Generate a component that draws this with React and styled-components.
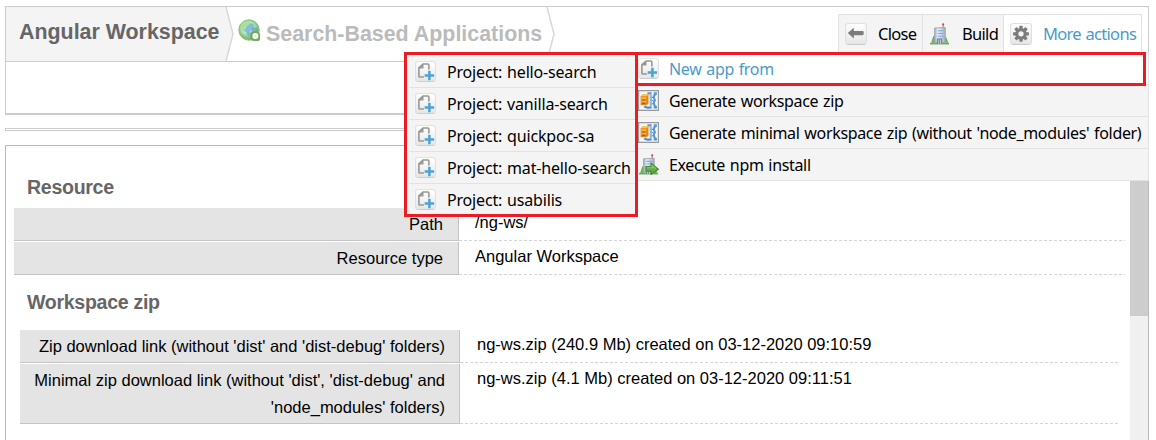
import React from "react";
import styled, { createGlobalStyle } from "styled-components";

const GlobalStyle = createGlobalStyle`
  * { box-sizing: border-box; }
  body { margin: 0; background: #fff; overflow: hidden; }
`;

const Page = styled.main`
  position: relative;
  width: 1156px;
  height: 440px;
  padding: 6px 7px 0 5px;
  overflow: hidden;
  color: #000;
  font: 16.5px/27px "Liberation Sans", Arial, sans-serif;
  white-space: nowrap;
`;

const Header = styled.header`
  height: 109px;
  border: 1px solid #ccc;
  border-bottom-width: 2px;
`;

const TopBar = styled.div`
  display: flex;
  height: 55px;
  border-bottom: 1px solid #ccc;
`;

const Crumb = styled.div`
  display: flex;
  flex: none;
  align-items: flex-start;
  width: ${(p) => p.$width}px;
  padding: ${(p) => (p.$current ? "10px 0 0 13px" : "12px 0 0 4px")};
  background: ${(p) => (p.$current ? "#f4f4f4" : "#fff")};
  color: ${(p) => (p.$current ? "#666" : "#bbb")};
  font-size: 21.4px;
  line-height: 30px;
  font-weight: bold;
  svg { flex: none; }
`;

const GlobeSlot = styled.span`
  flex: none;
  width: 28px;
  height: 24px;
  line-height: 0;
`;

const Toolbar = styled.nav`
  display: flex;
  width: 304px;
  height: 39px;
  margin: 7px 6px 0 auto;
  border: 1px solid #e2e2e2;
  border-bottom: 0;
`;

const Tool = styled.div`
  display: flex;
  flex: none;
  align-items: center;
  width: ${(p) => p.$width}px;
  padding-left: 6px;
  gap: ${(p) => p.$gap}px;
  background: ${(p) => (p.$active ? "#fff" : "#f4f4f4")};
  color: ${(p) => (p.$active ? "#4a9bc9" : "#000")};
  border-left: ${(p) => (p.$first ? 0 : "1px solid #e2e2e2")};
  font-size: 16.5px;
  svg { flex: none; }
`;

const Label = styled.span`
  font-family: "Noto Sans", sans-serif;
  letter-spacing: ${(p) => p.$spacing || 0}px;
  word-spacing: 1px;
`;

const ToolLabel = styled(Label)`
  letter-spacing: -0.7px;
  padding-bottom: 1px;
`;

const MenuLabel = styled(Label)`
  padding-top: 2px;
`;

const Splitter = styled.div`
  height: 3px;
  margin-top: 13px;
  border: 1px solid #ccc;
`;

const Panel = styled.section`
  display: flex;
  justify-content: space-between;
  height: 295px;
  margin-top: 14px;
  border: 1px solid #bbb;
  border-bottom: 0;
`;

const Content = styled.div`
  width: 1120px;
  padding-left: 8px;
`;

const Heading = styled.h2`
  height: ${(p) => p.$height}px;
  margin: 0;
  padding: ${(p) => p.$top}px 0 0 13px;
  color: #666;
  font-size: 19.6px;
  letter-spacing: -0.32px;
  line-height: 22px;
`;

const Properties = styled.div`
  width: ${(p) => (p.$inset ? 1099 : 1111)}px;
  margin-left: ${(p) => (p.$inset ? 6 : 0)}px;
  display: flex;
  flex-direction: column;
  gap: 1px;
`;

const Property = styled.div`
  display: flex;
  height: ${(p) => (p.$tall ? 60 : 33)}px;
`;

const PropertyName = styled.div`
  width: ${(p) => (p.$inset ? 440 : 445)}px;
  padding: 3px ${(p) => (p.$inset ? 14 : 15)}px 0 0;
  background: #e4e4e4;
  border: solid #c4c4c4;
  border-width: 0 1px 1px 0;
  text-align: right;
`;

const PropertyValue = styled.div`
  flex: 1;
  padding: 1px 0 0 ${(p) => (p.$inset ? 17 : 16)}px;
  background: repeating-linear-gradient(90deg, #d4d4d4 0 3px, transparent 3px 5px) 0 100% / 100% 1px no-repeat;
`;

const ScrollTrack = styled.div`
  width: 18px;
  background: #f0f0f0;
`;

const ScrollThumb = styled.div`
  height: 170px;
  background: #cdcdcd;
`;

const Menu = styled.div`
  position: absolute;
  top: 52px;
  left: 636px;
  width: 513px;
  border-top: 1px solid #e2e2e2;
  border-right: 1px solid #e2e2e2;
`;

const MenuItem = styled.div`
  display: flex;
  align-items: center;
  gap: ${(p) => p.$gap || 10}px;
  height: 32px;
  padding-left: ${(p) => p.$pad || 2}px;
  background: ${(p) => (p.$active ? "#fff" : "#f4f4f4")};
  color: ${(p) => (p.$active ? "#4a9bc9" : "#000")};
  border-bottom: 1px solid #e2e2e2;
  font-size: 16px;
  svg { flex: none; }
`;

const Submenu = styled.div`
  position: absolute;
  top: 52px;
  left: 404px;
  width: 234px;
  height: 165px;
  padding: 1px 0 0 2px;
  border: 3px solid #ed1c24;
  background: #f4f4f4;
  overflow: hidden;
`;

const Highlight = styled.div`
  position: absolute;
  top: 52px;
  left: 635px;
  width: 511px;
  height: 34px;
  border: 3px solid #ed1c24;
`;

const Tile = () => (
  <>
    <rect x=".5" y=".5" width="19" height="19" rx="2.5" fill="url(#tile)" stroke="#e0e0e0" />
    <path d="M2 19.5h16" stroke="#ccc" />
  </>
);

const Definitions = styled.svg`
  position: absolute;
`;

const Gradients = () => (
  <Definitions width="0" height="0">
    <defs>
      <linearGradient id="tile" x2="0" y2="1"><stop stopColor="#fff" /><stop offset="1" stopColor="#e6e6e6" /></linearGradient>
      <radialGradient id="globe" cx=".45" cy=".4"><stop stopColor="#d6f1f5" /><stop offset=".6" stopColor="#b9e5b8" /><stop offset="1" stopColor="#79bf6c" /></radialGradient>
      <linearGradient id="tower"><stop stopColor="#9eaab5" /><stop offset=".3" stopColor="#e4f0ff" /><stop offset="1" stopColor="#9faec0" /></linearGradient>
    </defs>
  </Definitions>
);

const Globe = () => (
  <svg width="22" height="22" viewBox="0 0 22 22">
    <circle cx="11" cy="11" r="10.2" fill="url(#globe)" stroke="#84c27a" strokeWidth="1" />
    <path d="M3.5 7 7 3l4-1 1 2-2 3-3 1-1 4-2-1z" fill="#a4dc8e" opacity=".8" />
    <path d="m8 8 5-4 3 2-1 4-3 2 1 3-3 3-2-5-2-1z" fill="#69add9" opacity=".75" />
    <path d="m15 8 4 1 1 4-4 1-3-2z" fill="#5e9fbd" opacity=".65" />
    <path d="M12 17q0-5 5-5 5 0 5 4v4q0 2-2 2h-4q-4 0-4-5z" fill="#76a85e" />
    <circle cx="17.4" cy="17" r="3" fill="#fff" />
    <path d="M17.4 16v2M16.4 17h2" stroke="#d5e6cd" />
  </svg>
);

const BackIcon = () => (
  <svg width="22" height="22" viewBox="0 0 20 20"><Tile /><path d="M2.5 9.2 8 4.4v2.9h8q1 0 1 1v1.8q0 1-1 1H8V14z" fill="#7c7c7c" /></svg>
);

const Tower = () => (
  <>
    <path d="M2.5 18 4.5 12l2 6M14 18l2-5 2 5" fill="#65ba53" stroke="#5ba44e" strokeWidth=".7" />
    <path d="M1 18h18v1.5H1z" fill="#65ae52" />
    <path d="m5.3 4.6 10.2-.6v14H5.3z" fill="url(#tower)" stroke="#9aa3ab" strokeWidth=".8" />
    <path d="M8 7h6M8 9.5h6M8 12h6" stroke="#86afd6" />
    <path d="M7.5 14h5v5h-5z" fill="#7c858e" />
    <path d="M9.2 15v4M11 15v4" stroke="#d8e0e5" strokeWidth=".7" />
    <path d="M13.5 4V1" stroke="#9b898d" /><circle cx="13.5" cy="1.3" r="1" fill="#dc3e35" />
  </>
);

const BuildIcon = () => (
  <svg width="21" height="22" viewBox="0 0 20 20" preserveAspectRatio="none"><Tower /></svg>
);

const GearIcon = () => (
  <svg width="22" height="22" viewBox="0 0 20 20">
    <Tile />
    <g fill="#7c7c7c">
      {[0, 45, 90, 135].map((a) => (
        <rect key={a} x="8.5" y="2.6" width="3" height="14.4" rx=".4" transform={`rotate(${a} 10 9.8)`} />
      ))}
    </g>
    <circle cx="10" cy="9.8" r="3.9" fill="none" stroke="#7c7c7c" strokeWidth="2.8" />
    <circle cx="10" cy="9.8" r="2.4" fill="#f5f5f5" />
  </svg>
);

const NewIcon = () => (
  <svg width="21" height="21" viewBox="0 0 20 20">
    <Tile />
    <path d="M8.5 15.2H4.7q-1 0-1-1V6.5l4-3.7h4.5q1 0 1 1V8" fill="none" stroke="#969696" strokeWidth="1.5" />
    <path d="M3.5 7.2h3.8q.8 0 .8-.8V3l-2 .9-2.6 2.5z" fill="#969696" />
    <path d="M13.7 9.3v9M9.2 13.8h9" stroke="#4ba4d5" strokeWidth="2.4" />
  </svg>
);

const ZipIcon = () => (
  <svg width="21" height="21" viewBox="0 0 20 20">
    <path d="M.5.5h19v19H.5z" fill="#f3f4f6" stroke="#999" strokeWidth="1.2" />
    <path d="M9 3.2h4M15 3.2h3" stroke="#5c98d8" strokeWidth="2" />
    <path d="M6 15.5q3 2 7 1M15 16.5h3" fill="none" stroke="#4d8bd0" strokeWidth="2" />
    <path d="M12.2 4.5v11" stroke="#8bbbe7" strokeWidth="2.2" />
    <path d="M17.5 3.5q-2.4 1-2.4 3t1 3.2q-1 1.3-1 3.2t2.4 3.5" fill="none" stroke="#5c98d8" strokeWidth="2" />
    <path d="M13.2 7h1.5M13.2 10h1.5M13.2 13h1.5" stroke="#5a91c9" />
    <path d="m2.5 6 2-2H10v9l-2 1.5H2.5z" fill="#df861c" />
    <path d="m2.5 6 2-2H10L8.3 6z" fill="#ffcd4b" />
    <path d="M3 7h4.8v2H3zM3 10h4.8v2H3z" fill="#f5b928" />
    <path d="M4 9.5h3M4 12.7h3" stroke="#985315" />
  </svg>
);

const InstallIcon = () => (
  <svg width="21" height="21" viewBox="0 0 20 20">
    <Tower />
    <path d="M7.5 12h5V8.7l7 5.8-7 5v-3h-5z" fill="#62ad45" stroke="#438a35" />
    <path d="M8.5 13h5v-2l3.4 3" fill="none" stroke="#91cd69" />
  </svg>
);

const projects = ["hello-search", "vanilla-search", "quickpoc-sa", "mat-hello-search", "usabilis"];

const actions = [
  { label: "New app from", icon: NewIcon, active: true },
  { label: "Generate workspace zip", icon: ZipIcon },
  { label: "Generate minimal workspace zip (without 'node_modules' folder)", icon: ZipIcon },
  { label: "Execute npm install", icon: InstallIcon },
];

const Chevron = styled.svg`
  flex: none;
`;

const Separator = ({ filled }) => (
  <Chevron width="9" height="54" viewBox="0 0 9 54">
    {filled && <path d="M0 0h1l7 27-7 27H0z" fill="#f4f4f4" />}
    <path d="m1 0 7 27-7 27" fill="none" stroke="#d8d8d8" strokeWidth="1.5" />
  </Chevron>
);

export default function App() {
  return (
    <Page>
      <GlobalStyle />
      <Gradients />
      <Header>
        <TopBar>
          <Crumb $current $width={219}>Angular Workspace</Crumb>
          <Separator filled />
          <Crumb $width={312}><GlobeSlot><Globe /></GlobeSlot>Search-Based Applications</Crumb>
          <Separator />
          <Toolbar>
            <Tool $first $width={83} $gap={11}><BackIcon /><ToolLabel>Close</ToolLabel></Tool>
            <Tool $width={81} $gap={12}><BuildIcon /><ToolLabel>Build</ToolLabel></Tool>
            <Tool $active $width={138} $gap={11}><GearIcon /><ToolLabel>More actions</ToolLabel></Tool>
          </Toolbar>
        </TopBar>
      </Header>
      <Splitter />
      <Panel>
        <Content>
          <Heading $height={62} $top={30}>Resource</Heading>
          <Properties>
            <Property><PropertyName>Path</PropertyName><PropertyValue>/ng-ws/</PropertyValue></Property>
            <Property><PropertyName>Resource type</PropertyName><PropertyValue>Angular Workspace</PropertyValue></Property>
          </Properties>
          <Heading $height={55} $top={16}>Workspace zip</Heading>
          <Properties $inset>
            <Property><PropertyName $inset>Zip download link (without 'dist' and 'dist-debug' folders)</PropertyName><PropertyValue $inset>ng-ws.zip (240.9 Mb) created on 03-12-2020 09:10:59</PropertyValue></Property>
            <Property $tall><PropertyName $inset>Minimal zip download link (without 'dist', 'dist-debug' and<br />'node_modules' folders)</PropertyName><PropertyValue $inset>ng-ws.zip (4.1 Mb) created on 03-12-2020 09:11:51</PropertyValue></Property>
          </Properties>
        </Content>
        <ScrollTrack><ScrollThumb /></ScrollTrack>
      </Panel>
      <Menu>
        {actions.map(({ label, icon: Icon, active }) => (
          <MenuItem key={label} $active={active}><Icon /><MenuLabel $spacing={-0.34}>{label}</MenuLabel></MenuItem>
        ))}
      </Menu>
      <Submenu>
        {projects.map((name) => (
          <MenuItem key={name} $pad={6} $gap={11}><NewIcon /><MenuLabel $spacing={-0.18}>Project: {name}</MenuLabel></MenuItem>
        ))}
      </Submenu>
      <Highlight />
    </Page>
  );
}
